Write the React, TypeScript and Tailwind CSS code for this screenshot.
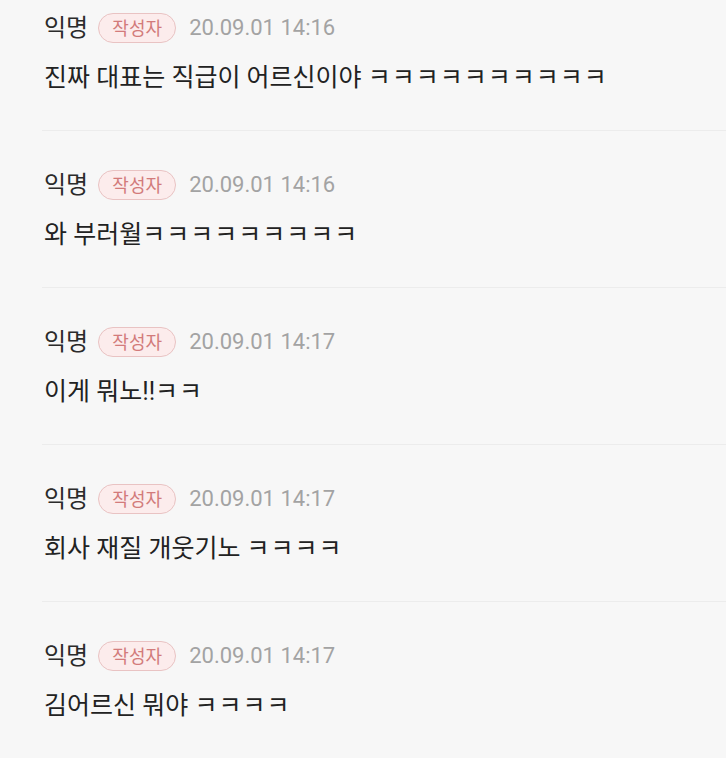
const comments = [
  { time: "20.09.01 14:16", text: "진짜 대표는 직급이 어르신이야 ㅋㅋㅋㅋㅋㅋㅋㅋㅋㅋ" },
  { time: "20.09.01 14:16", text: "와 부러월ㅋㅋㅋㅋㅋㅋㅋㅋㅋ" },
  { time: "20.09.01 14:17", text: "이게 뭐노!!ㅋㅋ" },
  { time: "20.09.01 14:17", text: "회사 재질 개웃기노 ㅋㅋㅋㅋ" },
  { time: "20.09.01 14:17", text: "김어르신 뭐야 ㅋㅋㅋㅋ" },
];

// ㅋ runs are spaced a little wider in the original font
const renderText = (text: string) =>
  text.split(/(ㅋ+)/).map((part, i) =>
    part.startsWith("ㅋ") ? (
      <span key={i} className="tracking-[1px]">
        {part}
      </span>
    ) : (
      part
    )
  );

const CommentRow = ({ time, text, first }: { time: string; text: string; first: boolean }) => (
  <div className={`ml-[42px] border-b border-[#ececec] pb-[36px] pl-[2px] ${first ? "pt-[13px]" : "pt-[39px]"}`}>
    <div className="flex h-[30px] items-center">
      <span className="text-[24px] leading-none text-[#2b2b2b]">익명</span>
      <span className="ml-[10px] flex h-[30px] w-[78px] items-center justify-center rounded-full border border-[#e9c3c3] bg-[#fcecec] text-[18px] text-[#d27b7b]">
        작성자
      </span>
      <span className="ml-[13px] text-[22px] leading-none text-[#a3a3a3]">{time}</span>
    </div>
    <p className="mt-[19px] h-[32px] text-[25px] leading-[32px] text-[#222]">{renderText(text)}</p>
  </div>
);

export default function App() {
  return (
    <div
      className="h-[758px] w-[726px] overflow-hidden bg-[#f7f7f7]"
      style={{ fontFamily: 'Roboto, "Noto Sans CJK KR", sans-serif' }}
    >
      {comments.map((c, i) => (
        <CommentRow key={i} time={c.time} text={c.text} first={i === 0} />
      ))}
    </div>
  );
}
